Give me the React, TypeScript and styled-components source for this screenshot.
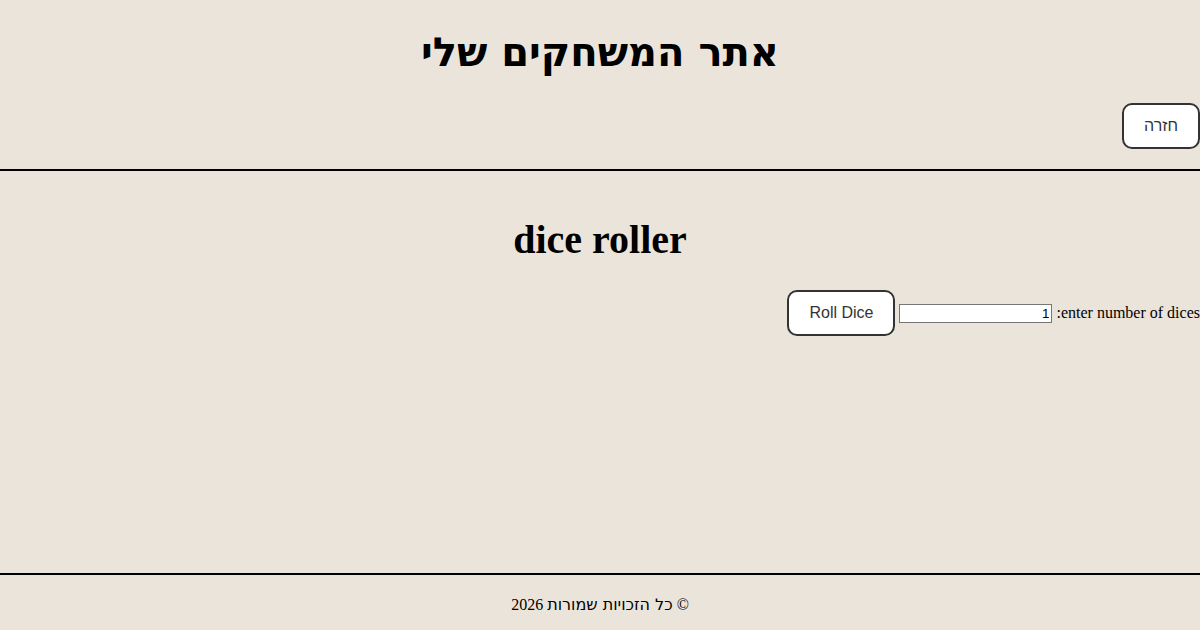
import styled, { createGlobalStyle } from "styled-components";

const GlobalStyle = createGlobalStyle`
  html, body {
    margin: 0;
    padding: 0;
    background: #ebe4da;
    font-family: "Liberation Serif", "Times New Roman", serif;
    font-size: 16px;
    color: #000;
  }
`;

const Page = styled.div`
  display: flex;
  flex-direction: column;
  min-height: 100vh;
`;

const Hebrew = styled.span`
  font-family: "DejaVu Sans", sans-serif;
`;

const Header = styled.header`
  border-bottom: 2px solid #000;
  padding-bottom: 20px;
`;

const SiteTitle = styled.h1`
  text-align: center;
  font-size: 40px;
  margin: 29px 0 27px;
  line-height: 1.15;
`;

const NavButton = styled.button`
  font-family: "Liberation Sans", Arial, sans-serif;
  font-size: 16px;
  color: #333;
  background: #fff;
  border: 2px solid #333;
  border-radius: 10px;
  padding: 12px 20px;
  cursor: pointer;
`;

const Main = styled.main`
  flex: 1;
`;

const GameTitle = styled.h2`
  text-align: center;
  font-size: 40px;
  line-height: 1.15;
  margin: 46px 0 27px;
`;

const Controls = styled.div`
  display: flex;
  align-items: center;
  gap: 4px;
`;

const Label = styled.label`
  font-size: 16px;
`;

const CountInput = styled.input`
  width: 147px;
  height: 15px;
  padding: 1px 2px;
  font-family: "Liberation Sans", Arial, sans-serif;
  font-size: 13.33px;
  border: 1px solid #767676;
  background: #fff;
  text-align: right;
  margin: 0;
`;

const Footer = styled.footer`
  border-top: 2px solid #000;
  padding: 20px 0 16px;
  text-align: center;
  font-size: 16px;
`;

export default function App() {
  return (
    <>
      <GlobalStyle />
      <Page dir="rtl">
        <Header>
          <SiteTitle>
            <Hebrew>אתר המשחקים שלי</Hebrew>
          </SiteTitle>
          <NavButton>חזרה</NavButton>
        </Header>
        <Main>
          <GameTitle>dice roller</GameTitle>
          <Controls>
            <Label htmlFor="dices">enter number of dices:</Label>
            <CountInput id="dices" type="text" defaultValue="1" />
            <NavButton>Roll Dice</NavButton>
          </Controls>
        </Main>
        <Footer>
          © <Hebrew>כל הזכויות שמורות</Hebrew> 2026
        </Footer>
      </Page>
    </>
  );
}
